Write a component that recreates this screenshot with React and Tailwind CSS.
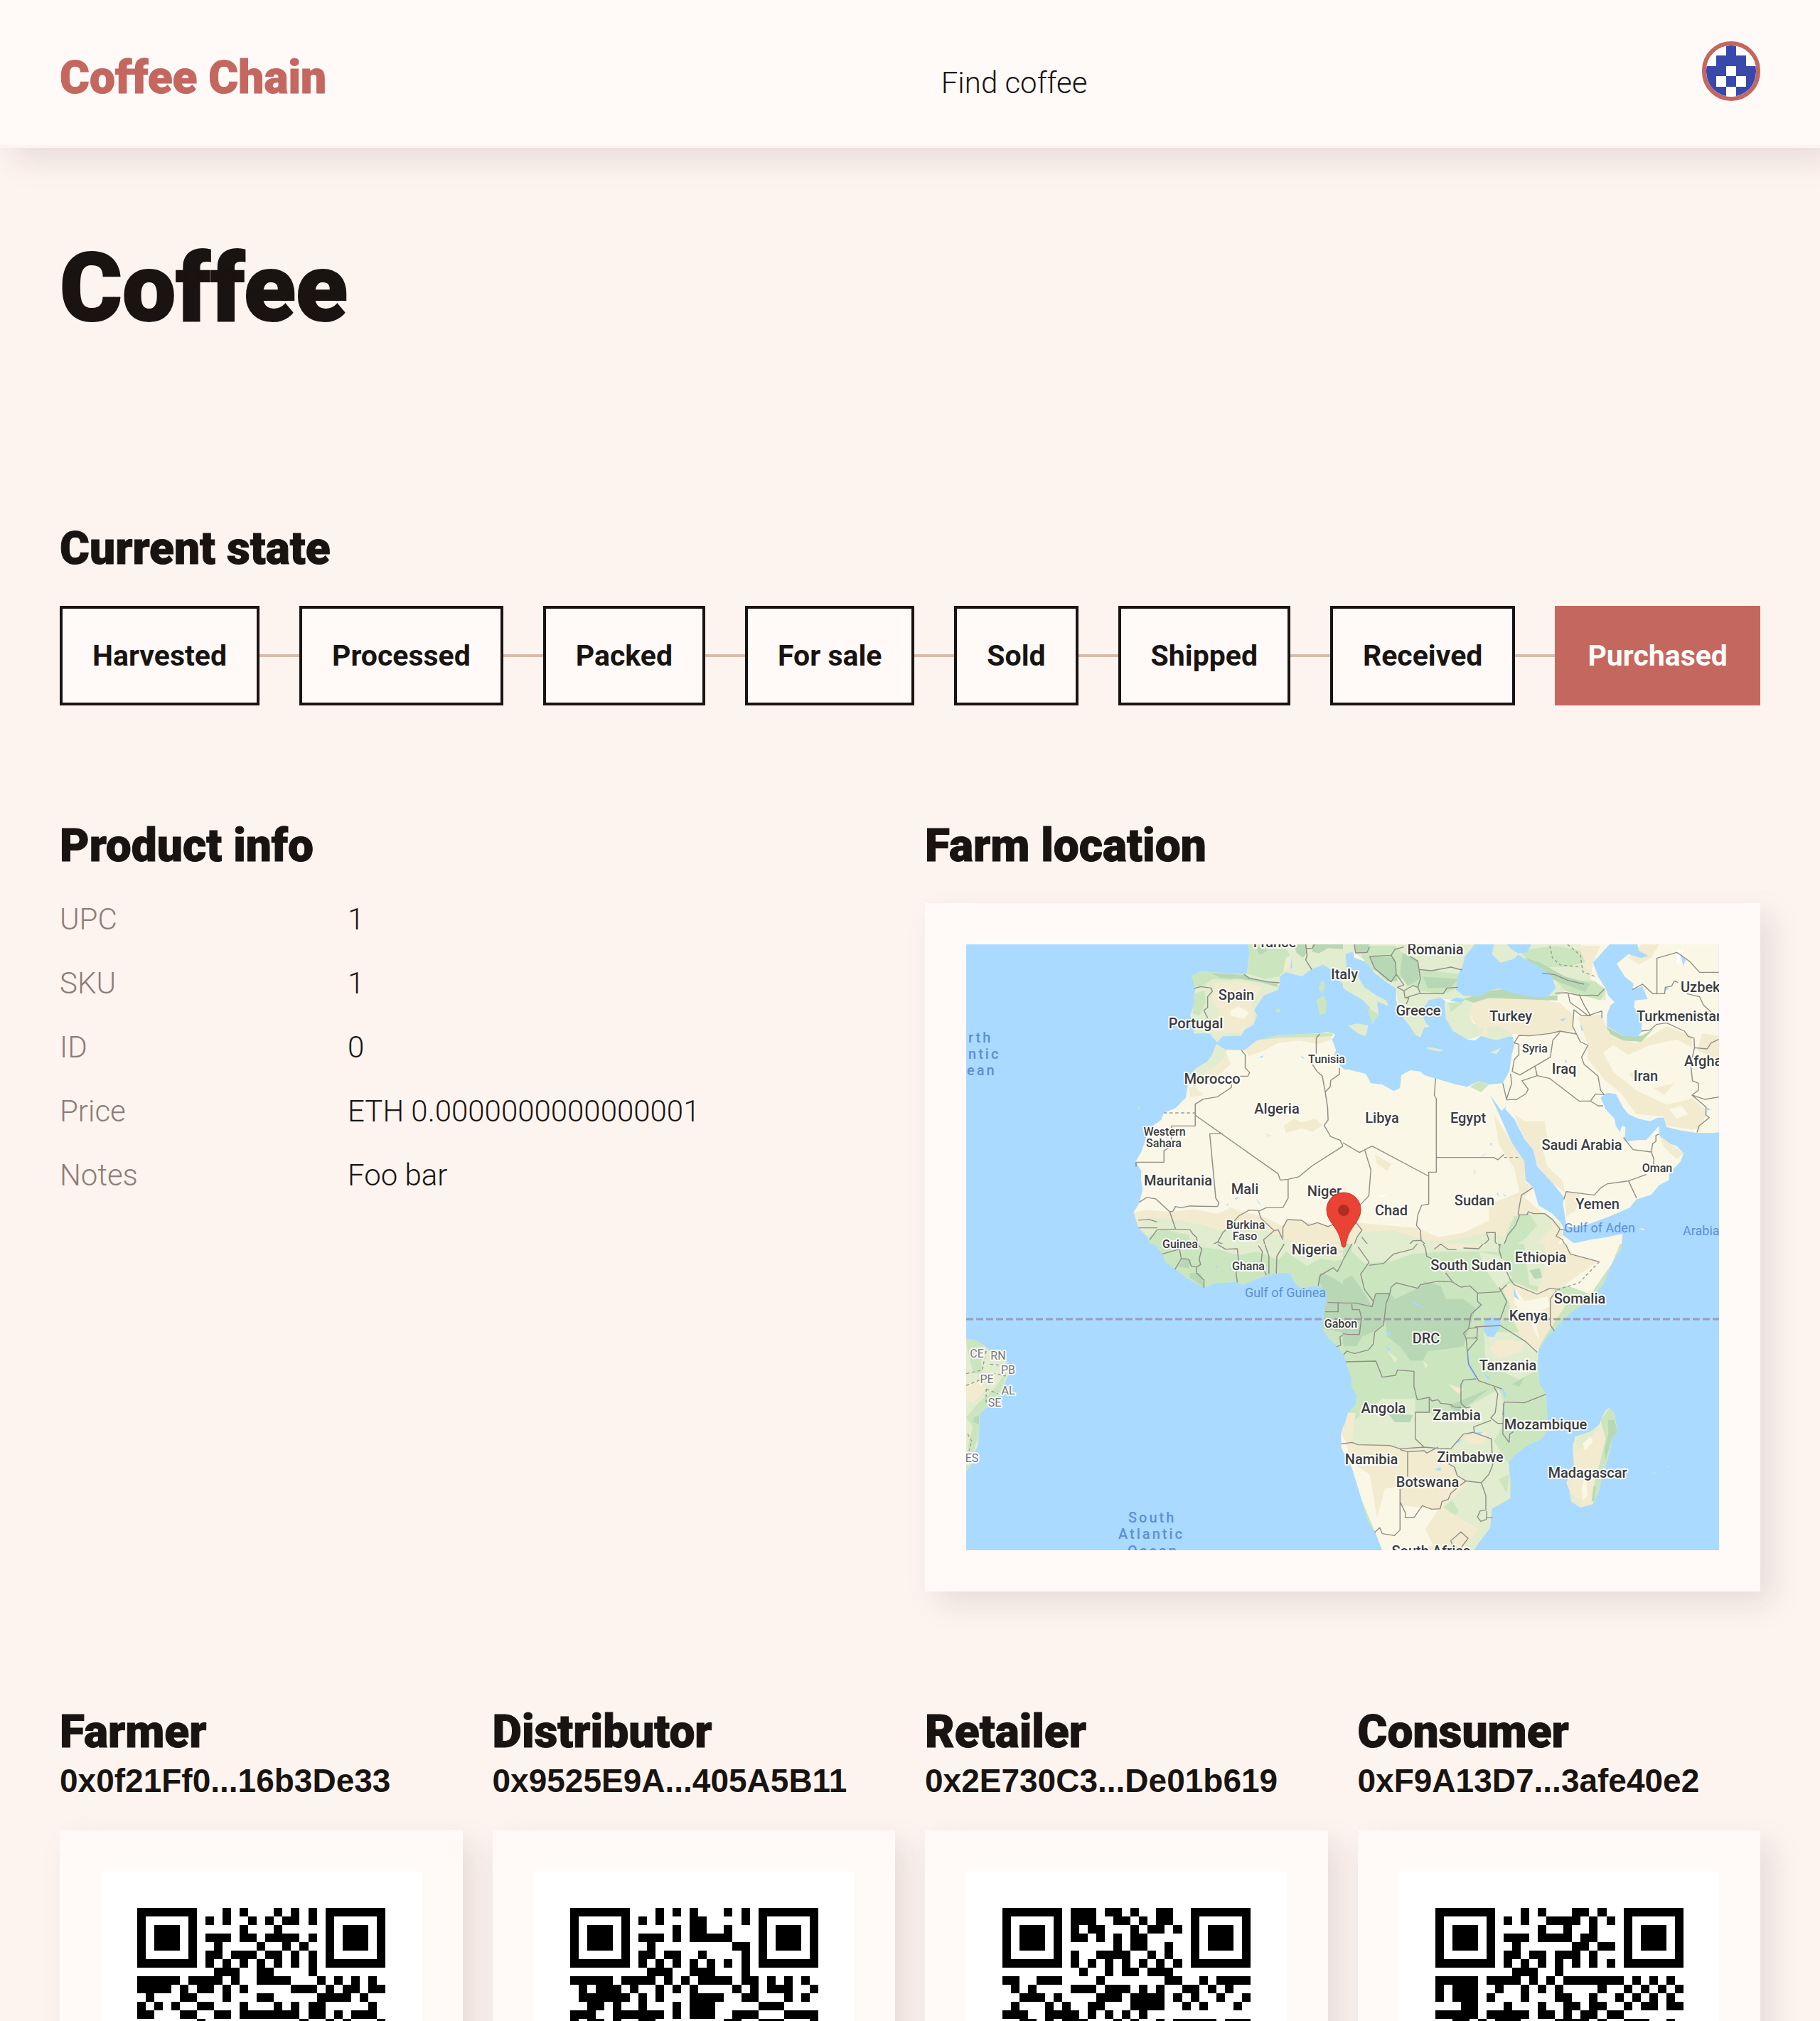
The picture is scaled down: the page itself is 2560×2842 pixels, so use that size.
import React from "react";

const STATES = ["Harvested", "Processed", "Packed", "For sale", "Sold", "Shipped", "Received", "Purchased"];
const CURRENT_STATE = "Purchased";

const INFO = [
  ["UPC", "1"],
  ["SKU", "1"],
  ["ID", "0"],
  ["Price", "ETH 0.0000000000000001"],
  ["Notes", "Foo bar"],
];

/* Each QR row lists its dark modules as column numbers or ranges; finder patterns are drawn apart. */
const PARTIES = [
  {
    role: "Farmer",
    address: "0x0f21Ff0...16b3De33",
    qr: [
      "10 12 16 18 20", "8 10 13 15 17-18 20", "12 16", "8-10 12-13 15-18 20", "9 14 17 19",
      "8-9 11-13 15-16 18 20", "8 10 12 14 16 18 20", "9-11 14-15 20",
      "0-4 6-9 11 14-17 21 23 25 27", "0-3 5 7-8 10 12 18-20 22 24-25 27-28", "1 5-6 10 14-15 21-24 26",
      "0 2 4 7-8 12 16 18 20-21 27", "0-1 5-6 9-10 12-18 20-21 23 25-27", "7 19 22 24 28",
    ],
  },
  {
    role: "Distributor",
    address: "0x9525E9A...405A5B11",
    qr: [
      "10 12 14 18 20", "8 10 14-15 20", "12 14-15 18", "8-10 12 14-18", "9 19-20",
      "8-9 11-12 15 20", "8 10 12 14 16 18 20", "9-11 14-16 20",
      "0-4 6-9 11 13 15-18 20-21 23 25 27", "1 3-5 7 10 12 14 19 21 23-25 28", "1-6 8 10 14-17 20-21 25 27",
      "2-3 5 8 12 14-16 22-24", "0-2 5-10 12 14-16 19-21 25-28", "0 2-3 5 8-9 18-19 22-24 28",
    ],
  },
  {
    role: "Retailer",
    address: "0x2E730C3...De01b619",
    qr: [
      "8-10 12-13 15 18-19", "8-10 13-14 16 18-19", "8 10-11 15 17-18 20", "8-9 11 13 15-16", "13 15-16 19",
      "8 11-14 17 19", "8 10 12 14 16 18 20", "9 12 14-15 17-19",
      "0-1 4-6 11 19-20 23 25-28", "1 3 8-10 12-14 16 18 21-22 24 26", "2-4 6 11-13 15-18 20 22 25 28",
      "1 5 7 10-11 15-18 21 23 27", "0-2 5-8 10 12 14 16", "2-3 5 7-9 13 15 18 20-24 26-28",
    ],
  },
  {
    role: "Consumer",
    address: "0xF9A13D7...3afe40e2",
    qr: [
      "10 12 16-17 19", "8 10 13-16 18 20", "12 15 18", "8-10 12-15 17-18", "9 16-17 19-20",
      "8-9 11-12 14-16 18", "8 10 12 14 16 18 20", "9-11 14",
      "0-4 6-9 11 13 15-21 23 25 27", "0 2-4 7 10 12 14 19 22 24 26 28", "0 2-4 6 10 14-15 18 21 23 25 27",
      "3-4 8 12 15-16 18-19 22 24-25 27-28", "0-4 6-10 12-13 15 17-18 20-21", "2-3 5 7-9 14-17 19 22-24 27",
    ],
  },
];

function QrCode({ rows, label }) {
  const d = rows
    .map((row, y) =>
      row
        .split(" ")
        .map((run) => {
          const [a, b = a] = run.split("-").map(Number);
          return `M${a} ${y}h${b - a + 1}v1h-${b - a + 1}z`;
        })
        .join("")
    )
    .join("");
  const finder = (x, y) =>
    `M${x} ${y}h7v7h-7zM${x + 1} ${y + 1}v5h5v-5zM${x + 2} ${y + 2}h3v3h-3z`;
  return (
    <svg viewBox="-4.2 -4.2 37.4 37.4" role="img" aria-label={label} className="block w-full bg-white" shapeRendering="crispEdges">
      <path d={d} />
      <path d={finder(0, 0) + finder(22, 0) + finder(0, 22)} />
    </svg>
  );
}

function Avatar() {
  return (
    <svg viewBox="0 0 5 5" preserveAspectRatio="none" className="h-full w-full" shapeRendering="crispEdges" aria-hidden="true">
      <rect width="5" height="5" fill="#fff" />
      <path fill="#3949ab" d="M2 0h1v1h1v1h1v3h-2v-1h-1v1h-2v-3h1v-1h1zM2 2v1h1v-1zM1 3v1h1v-1zM3 3v1h1v-1z" />
    </svg>
  );
}

const C = { land: "#faf7e6", tan: "#f2ebcf", pale: "#e2eccf", green: "#cbe6bf", deep: "#b8d8b5", sea: "#aadaff" };

const TL = [
  [C.pale, "M1126 54L1130 90 1122 178 1060 178 1000 172 945 168 912 190 925 240 920 310 905 355 922 400 918 430 980 430 1008 468 1030 442 1100 440 1112 415 1145 395 1160 355 1150 330 1185 270 1240 245 1248 215 1245 190 1270 172 1330 190 1365 160 1410 140 1450 165 1480 215 1520 260 1568 300 1568 250 1540 190 1500 140 1492 100 1525 90 1568 54Z"],
  [C.green, "M1126 54L1130 90 1124 178 1190 200 1240 190 1262 168 1290 110 1260 54ZM912 190L945 168 1060 178 1110 190 1060 205 990 200 960 225 925 235ZM925 260L960 250 965 300 940 355 915 345Z"],
  [C.deep, "M1300 54L1345 54 1350 90 1335 110 1310 90ZM1370 54L1530 54 1500 75 1430 70 1395 92 1370 85ZM985 175L1110 182 1160 205 1235 220 1240 235 1180 215 1100 200 1020 195ZM1150 54L1200 80 1170 100Z"],
  [C.tan, "M1000 215L1100 210 1180 235 1140 300 1150 370 1100 430 1000 425 975 400 1020 340 985 290ZM1270 110L1290 100 1285 150 1260 165Z"],
  [C.land, "M1060 330L1090 315 1130 340 1110 370 1060 355Z"],
  [C.green, "M1395 235L1405 208 1416 212 1418 240 1408 258 1396 245ZM1385 290L1415 268 1425 300 1420 345 1395 354 1392 320ZM1228 330L1243 324 1250 336 1238 342ZM1500 400L1530 388 1568 395 1568 432 1540 425ZM704 742L718 740 708 750Z"],
  [C.land, "M1005 475L1030 498 1112 500 1160 460 1240 438 1360 432 1395 430 1430 422 1458 435 1445 455 1460 500 1450 530 1475 565 1490 580 1530 582 1568 598 1568 1350 765 1350 745 1290 715 1255 705 1235 710 1210 690 1185 712 1145 725 1090 718 1040 720 1010 698 970 720 930 750 830 795 795 805 765 850 745 890 700 895 660 900 620 925 580 970 550 990 520Z"],
  [C.tan, "M1112 500L1160 460 1240 438 1395 430 1440 425 1445 455 1390 475 1320 460 1240 470 1190 500 1130 525ZM1040 500L1060 560 1000 620 900 660 905 700 960 690 890 625 925 580ZM690 1185L740 1175 830 1182 920 1172 1010 1190 1060 1165 1110 1185 1180 1200 1250 1240 1290 1215 1420 1240 1470 1232 1568 1240 1568 1350 765 1350 745 1290 705 1235ZM1260 820L1300 790 1330 805 1380 790 1410 815 1370 845 1330 830 1270 850ZM1190 850L1215 860 1200 868Z"],
  [C.pale, "M1005 475L1045 500 1030 540 960 600 915 612 925 580 970 550 990 520ZM740 1205L850 1215 940 1235 1020 1260 1080 1240 1180 1260 1240 1280 1300 1310 1400 1330 1520 1290 1568 1350 765 1350 745 1290 712 1250Z"],
  [C.green, "M1160 458L1240 436 1400 430 1440 424 1450 440 1380 445 1250 448ZM765 1350L745 1290 800 1255 900 1280 920 1350ZM940 1350L960 1325 1000 1330 1000 1350Z"],
  [C.sea, "M1165 532L1185 522 1180 532ZM1325 525L1338 530 1335 537ZM1075 1125L1095 1120 1080 1132ZM1155 1125L1178 1158 1165 1145ZM1045 1150L1052 1148 1046 1158ZM1290 110L1294 150 1287 158Z"],
];
const TL_LINES = "M1110 180L1130 197 1170 205 1200 212 1245 216M922 240L945 232 985 238 990 252 972 275 972 320 958 332 972 365M1345 54L1350 100 1345 120 1368 160M1345 72L1370 70 1378 54M1525 54L1532 88 1568 88M1100 500L1115 520 1115 575 1132 595 1125 610 1095 610M1062 645L1062 658 1010 697 955 707 925 728 925 820 835 820 835 905 806 925 806 973 700 973 700 992M925 775L1240 1022 1248 1048 1278 1045 1318 1035 1370 988 1487 905 1475 880 1440 865 1415 818 1430 795 1428 740 1418 670 1408 610 1388 590 1370 560M1398 432L1385 450 1385 515M1473 575L1473 602 1440 628 1438 655 1418 678M1487 905L1515 912 1545 930 1568 922M1030 853L980 853 1003 1125 1015 1145 1010 1160 905 1158 870 1165 850 1160 840 1180 828 1182 775 1128 740 1122 712 1142M828 1182L850 1255 905 1258 915 1275 930 1290 935 1330M1278 1048L1278 1125 1258 1165 1195 1165 1170 1178 1130 1175 1090 1200 1060 1240 1030 1270 1010 1310M1165 1178L1175 1210 1225 1262 1240 1258 1258 1300M1258 1290L1258 1250 1275 1215 1330 1218 1355 1240 1390 1228 1430 1245 1460 1230M1540 1160L1568 1130M1535 1225L1555 1250 1548 1290 1525 1350M850 1255L780 1258 752 1300M1225 1262L1185 1300 1195 1350M708 1218L750 1215 780 1225M710 1250L780 1250M1010 1310L980 1325 940 1320M1010 1310L1080 1340 1085 1350";

const TR = [
  [C.land, "M65 54L1506 54 1506 847 1480 850 1420 850 1360 840 1300 825 1290 785 1265 785 1235 800 1190 790 1150 770 1130 745 1100 685 1065 680 1040 700 1060 750 1095 790 1100 820 1140 885 1190 880 1220 880 1270 820 1272 860 1300 890 1340 905 1367 935 1355 970 1310 1020 1310 1048 1270 1070 1240 1110 1180 1130 1155 1165 1080 1200 990 1235 920 1250 905 1240 892 1150 895 1120 850 1060 790 990 775 920 740 875 700 790 665 750 670 710 665 740 650 757 605 690 640 770 690 890 730 960 745 1050 775 1080 795 1155 850 1190 880 1225 895 1250 890 1280 935 1315 1000 1300 1060 1290 1127 1275 1120 1350 0 1350 0 580 50 583 115 600 135 640 180 645 225 673 250 660 255 605 290 585 330 590 345 605 390 620 470 645 515 655 560 630 600 645 655 640 680 590 690 520 700 480 695 445 660 435 630 458 600 450 570 440 545 460 515 455 490 430 460 420 450 400 430 365 440 340 425 310 430 295 400 282 365 290 345 315 335 345 350 385 365 400 345 405 330 445 310 435 290 400 275 380 245 335 235 290 235 240 200 215 150 175 120 130 70 110 65 85Z"],
  [C.pale, "M0 54L65 54 65 85 35 95 40 150 85 190 110 235 150 265 195 290 205 315 160 295 165 350 140 390 145 360 130 320 105 290 40 250 0 215ZM45 397L80 388 125 395 115 442 85 430ZM355 488L380 490 422 500 405 506 360 496ZM603 510L648 490 630 517ZM65 54L780 54 960 54 1000 100 1000 200 1060 240 1060 290 980 270 900 250 830 300 560 300 500 290 400 282 365 290 345 315 335 345 350 385 365 400 345 405 330 445 310 435 290 400 245 335 235 240 150 175 120 130 65 85ZM425 300L560 290 520 350 540 390 640 400 700 415 690 440 630 458 570 440 515 455 460 420 430 365Z"],
  [C.tan, "M540 290L700 280 880 300 930 350 930 420 840 430 760 440 690 430 640 400 560 410 520 350ZM930 60L1040 60 1010 130 1000 200 960 120ZM1200 54L1270 54 1240 110 1190 140 1150 110ZM950 360L1040 350 1080 440 1180 470 1240 440 1300 400 1400 440 1400 490 1340 455 1230 480 1150 520 1090 480 1050 510 1090 590 1180 670 1300 730 1380 710 1400 700 1460 760 1430 840 1300 820 1290 780 1180 770 1120 680 1060 630 990 540 990 480ZM1150 600L1190 580 1170 625ZM1250 660L1330 640 1290 690ZM1440 430L1506 440 1506 540 1420 500ZM700 770L740 800 820 800 830 870 800 880 830 990 890 1050 900 1100 850 1060 790 990 775 920 740 875ZM620 770L690 890 740 970 745 1060 775 1080 740 1120 720 1100 700 1000 640 900ZM900 1095L960 1105 940 1180 905 1200ZM1270 860L1367 935 1340 960 1290 910ZM100 1230L200 1240 320 1250 400 1290 500 1270 600 1220 600 1150 720 1100 790 1170 880 1230 890 1280 860 1350 0 1350 60 1220ZM150 940L215 980 200 1010 160 980ZM560 440L590 400 600 440Z"],
  [C.land, "M1310 750L1360 735 1385 770 1340 790Z"],
  [C.pale, "M90 1270L220 1260 340 1300 420 1310 600 1270 660 1290 680 1230 720 1190 840 1200 850 1250 800 1300 780 1350 60 1350Z"],
  [C.green, "M100 60L230 60 330 160 490 180 470 240 420 265 330 250 260 200 140 160 100 110ZM720 80L860 60 960 80 980 130 900 150 830 150 760 130ZM860 200L1020 210 1060 250 1040 290 900 250ZM700 1200L760 1190 790 1240 740 1300 660 1350 670 1280ZM525 655L560 630 600 645 570 678ZM120 320L165 350 140 390ZM440 300L500 300 450 340Z"],
  [C.deep, "M70 54L130 54 125 90 75 90ZM130 105L230 110 240 210 200 210 150 160ZM260 90L320 120 325 200 280 230 250 180ZM340 190L480 200 450 235 360 240ZM740 110L800 130 900 190 1000 220 980 255 880 215 810 180ZM500 285L600 250 680 240 780 275 870 270 870 290 720 285 600 280 540 300ZM1060 400L1130 440 1200 440 1250 410 1200 465 1130 460 1080 435Z"],
  [C.sea, "M545 54L620 54 612 95 645 132 700 115 715 98 740 115 800 150 850 190 862 240 830 278 770 275 700 260 640 240 600 250 560 275 500 270 470 245 480 180 498 140 505 105ZM670 54L768 54 750 88 715 92 690 75ZM1045 90L1075 54 1185 54 1190 80 1228 102 1200 112 1150 95 1103 135 1135 190 1170 220 1165 245 1205 230 1225 285 1175 290 1172 320 1205 360 1200 425 1185 445 1130 440 1065 400 1065 350 1080 310 1095 298 1070 270 1060 240 1030 190 1010 130ZM445 292L470 278 512 286 490 300ZM360 290L410 280 425 290 420 312 370 310ZM880 370L905 365 890 380ZM960 390L972 415 965 420ZM900 535L908 550 903 555ZM1355 90L1375 120 1365 145ZM1295 232L1310 240 1298 248ZM565 952L595 932 580 945ZM540 1000L548 1020 543 1018ZM605 895L614 892 608 905ZM655 1105L670 1118 660 1115ZM630 1105L635 1102 640 1122ZM732 1268L742 1265 738 1278ZM1455 740L1475 750 1460 755Z"],
  [C.land, "M1115 850L1125 818 1138 825 1136 865 1125 872ZM1192 1252L1215 1254 1205 1260Z"],
  ["#ffffff", "M1340 80L1358 75 1350 135 1340 135ZM165 1115L205 1108 180 1120ZM1405 835L1418 835 1412 850ZM1360 70L1370 85 1362 90Z"],
];
const TR_LINES = "M130 105L215 100 232 130 235 180 215 212 150 155 130 105M70 54L75 90 120 88 130 65M215 100L230 75 265 65M290 105L320 125 325 160 375 165 450 150 495 162M325 160L330 200 320 235 330 260 270 280 265 250 300 228 320 235M235 180L265 225 240 235 265 250M330 262L420 262 435 238 478 235M270 280L285 280 275 305M810 175L860 182 910 205 975 222M860 260L905 258 960 270 1005 268 1030 270 1055 242M912 260L920 300 955 325 990 355M955 265L975 310 1000 355 965 355 935 330 930 400 945 432 880 420 840 430 760 440 718 438 700 470 718 475 718 520 700 540 692 590 722 605 842 530 852 458 880 425M990 355L1045 335 1045 365M945 432L960 465 990 480 965 530 975 560 1030 610 1040 670 1055 688M1055 688L1020 685 1000 715 955 715 840 620 790 608 782 568M1000 715L1030 735 1050 735M790 608L730 630 755 665 745 685 710 708 670 710 655 640M685 600L690 640 670 705M1200 420L1235 415 1260 392 1300 385 1370 420 1385 442 1408 450 1410 490 1460 495 1475 470 1506 455M1410 490L1395 560 1402 630 1425 640 1425 670 1400 690 1455 740 1455 775 1468 785 1428 820 1420 848M1400 690L1450 708 1506 698M1165 245L1205 222 1245 262 1292 262 1295 235 1320 230 1330 208 1345 215M1262 265L1262 112 1340 88 1390 125 1430 172 1506 172M1380 262L1430 275 1445 310 1475 340M1130 870L1168 920 1240 930 1245 895 1258 885 1258 860 1270 855M1240 930L1250 960 1248 985M1220 1025L1150 1052 1065 1065 1040 1082 1015 1112 905 1097 895 1130M1150 1052L1182 1125M390 620L385 690 393 705 393 1015 363 1015 363 1150 335 1155 320 1195 315 1240 330 1260 333 1303 350 1320 355 1350M393 953L620 953 635 963 660 940M363 1032L140 905 90 932 0 875M110 918L135 1005 127 1115 60 1190M12 575L12 602 0 605M333 1303L300 1305 260 1350M774 1080L728 1112 715 1190 720 1200 705 1240 675 1280 650 1345M715 1195L750 1195 755 1182 775 1190 820 1190 850 1215 880 1255 900 1260M880 1255L865 1285 890 1300 910 1350M75 1225L100 1260 80 1290 60 1350M100 1290L130 1330 80 1330M385 1335L420 1320 440 1340 475 1340M500 1330L560 1340 600 1300 590 1270 625 1270 625 1310 650 1345";

const BL = [
  [C.green, "M750 0L770 30 800 70 810 105 850 135 890 170 930 195 958 212 1000 195 1080 188 1105 200 1150 180 1200 160 1250 150 1285 152 1305 195 1330 215 1380 205 1405 210 1428 235 1425 280 1415 310 1420 340 1408 385 1430 425 1465 460 1490 500 1500 540 1520 590 1515 625 1535 660 1535 700 1505 735 1495 780 1480 825 1480 885 1495 930 1520 980 1550 1040 1555 1100 1568 1160 1568 0Z"],
  [C.pale, "M930 0L1568 0 1568 20 1510 80 1460 100 1400 90 1350 120 1270 60 1240 95 1160 60 1090 75 1010 50 940 40ZM1525 760L1568 720 1568 870 1500 870Z"],
  [C.tan, "M1280 0L1568 0 1530 40 1470 80 1300 40ZM1505 735L1525 760 1505 860 1568 875 1568 1160 1550 1040 1480 885 1480 825Z"],
  [C.deep, "M880 90L910 95 900 130 860 125ZM905 150L945 150 958 210 905 170ZM1400 150L1430 160 1520 220 1568 200 1568 290 1560 400 1568 450 1510 460 1480 400 1408 385 1425 240 1390 180Z"],
  [C.land, "M1480 830L1492 840 1485 890 1520 960 1555 1040 1568 1160 1550 1040 1520 980 1480 885Z"],
  [C.sea, "M1135 85L1160 110 1185 125 1160 120ZM1005 115L1012 125 1005 132ZM1480 55L1485 60 1470 65Z"],
  [C.pale, "M54 430L85 432 115 450 145 480 200 490 210 530 215 580 190 640 180 670 130 720 105 745 103 830 98 880 75 930 70 965 54 990Z"],
  [C.green, "M54 430L85 432 115 450 130 480 110 520 115 580 80 570 60 480ZM212 560L190 640 130 720 105 745 103 830 75 930 60 880 80 800 54 760 100 700 160 640ZM54 960L70 960 54 990Z"],
  [C.tan, "M54 620L100 600 130 640 80 700 54 690Z"],
  [C.deep, "M85 760L103 750 103 790 80 780Z"],
];
const BL_LINES = "M865 50L872 90 848 135M872 90L900 92 910 122 930 125 930 150 958 180 958 212M800 70L865 50M935 30L950 50 940 90 945 115 930 125M1010 30L1040 50 1085 48 1090 110 1080 150 1085 190M1165 35L1180 60 1175 110 1195 160M1190 30L1205 80 1205 155M1258 0L1262 30 1235 80 1233 152M1538 0L1500 70 1465 145 1450 128 1400 160 1392 205M1545 40L1568 60 1552 160 1568 200M1428 275L1568 278M1468 278L1468 314 1418 314M1520 282L1522 305 1545 305 1550 360 1552 410 1510 415 1500 402 1475 420 1478 455 1462 462M1568 478L1520 490 1505 480 1490 510M1495 525L1568 522M1478 872L1520 865 1545 875 1568 875";
const BL_DOTS = "M130 480L115 560 54 575M145 535L190 540M54 625L110 600 160 575 205 585M130 640L175 660M130 640L130 700M60 830L75 860 65 900";

const BR = [
  [C.green, "M0 460L30 500 50 570 60 600 58 630 78 665 75 705 45 740 35 790 20 830 20 890 60 970 95 1040 100 1110 120 1190 155 1250 180 1320 540 1320 570 1270 605 1225 612 1145 680 1105 688 1050 685 1010 670 960 700 920 750 880 810 850 830 815 830 740 825 660 800 620 795 540 790 490 825 425 870 375 920 320 1000 260 1050 200 1085 110 1120 50 1127 0 905 0 0 0Z"],
  [C.pale, "M60 0L650 0 640 60 560 60 420 60 300 70 220 100 110 110 60 60ZM560 60L650 80 690 170 640 220 590 140ZM580 400L800 400 790 560 720 600 640 560 590 560ZM180 680L310 680 310 740 370 740 400 780 540 700 640 640 660 700 660 780 620 860 680 960 685 1100 612 1145 605 1225 540 1320 400 1320 480 1150 400 1020 300 900 45 880 60 780ZM735 0L900 0 1040 100 860 220 760 200ZM200 480L240 510 230 530ZM340 520L360 540 350 555Z"],
  [C.tan, "M340 0L600 0 590 30 470 50 390 40ZM820 0L1040 100 960 190 860 220 900 290 820 420 790 480 740 440 700 360 680 280 650 210 700 190 790 230 820 130ZM640 430L740 440 730 480 640 510 600 470ZM45 740L75 740 60 870 280 890 460 900 440 960 520 1040 420 1140 480 1180 560 1230 500 1320 180 1320 155 1250 100 1110 60 970 20 890 20 830ZM440 620L500 640 480 660ZM500 840L590 820 580 870 520 870Z"],
  [C.land, "M900 20L930 25 1060 8 1127 0 1085 110 1000 240 900 200 1030 100 920 70ZM700 210L740 270 830 250 840 290 780 330 800 440 760 350 700 280ZM20 830L35 860 60 950 130 1000 160 1180 190 1060 250 1050 250 1130 330 1140 400 1150 350 1230 380 1300 300 1320 180 1320 155 1250 100 1110 60 970 20 890Z"],
  [C.deep, "M0 200L60 160 100 220 140 290 150 240 210 235 230 260 210 330 160 390 100 420 80 460 30 460 0 400ZM230 260L320 215 350 185 410 205 430 260 500 260 550 300 510 420 500 460 440 470 360 480 340 520 290 520 250 460 200 420 190 350ZM760 140L800 130 810 170 780 175ZM690 620L740 590 720 630ZM200 740L300 750 290 780 230 780ZM440 710L600 640 540 690 480 740Z"],
  [C.green, "M640 1020L680 1000 670 1080ZM660 700L825 665 830 815 700 900 660 940 640 860Z"],
  [C.sea, "M585 345L610 335 645 345 645 375 620 420 590 418 580 390ZM512 470L520 480 525 530 560 600 545 595 515 540ZM550 290L570 280 555 300ZM652 635L668 660 665 680 655 660ZM655 700L665 750 655 740ZM698 205L708 240 720 265 700 250ZM580 570L608 598 590 595ZM195 395L212 402 205 420ZM490 605L500 620 490 630ZM385 980L410 970 410 985ZM190 455L215 475 205 478ZM290 265L350 300 310 285ZM545 822L580 822 555 830ZM470 860L495 852 480 868Z"],
  [C.tan, "M1075 718L1095 745 1105 820 1085 850 1075 910 1050 1000 1030 1080 1010 1125 960 1140 925 1115 918 1070 905 1035 935 970 930 880 940 840 1000 820 1035 790 1045 760 1060 730Z"],
  [C.green, "M1075 718L1095 745 1105 820 1085 850 1075 910 1050 1000 1030 1080 1010 1125 1010 1060 1040 940 1060 850 1040 770Z"],
  [C.deep, "M1070 770L1095 770 1105 820 1085 850 1060 940 1055 900 1070 830ZM1012 1050L1022 1050 1015 1110 1005 1115Z"],
  [C.pale, "M940 840L1000 820 1030 800 990 870 950 900ZM920 1080L960 1110 960 1138 925 1115ZM1248 990L1254 992 1250 1000ZM1303 965L1310 968 1305 972Z"],
  [C.land, "M965 1060L980 1000 990 1090 970 1110ZM970 870L1000 840 1010 860 980 900Z"],
];
const BR_LINES = "M75 0L0 145M85 40L128 105 95 155 110 220 145 270 140 293 75 277 0 277M8 280L8 314 0 314M60 282L62 305 90 305 98 340 90 410 45 410 20 405 15 455 0 462M128 118L185 110 225 70 300 50 330 12 335 0M335 15L350 45 355 80 375 90M210 237L155 237 143 275M210 237L215 210 235 192 320 215 330 200 400 185 455 188 490 210 525 205 555 235 555 270 570 285 530 325 520 385M210 237L195 280 185 370 150 400 145 450 125 475 70 490 40 480 28 495M455 185L430 150M555 235L640 230 670 200M640 210L670 270 645 345M670 145L685 180 700 200 790 240 840 215 880 220M865 225L842 260 842 370 858 395M545 378L645 372 745 440 790 485M520 385L555 380 553 425 510 425 500 405 520 385M510 425L515 480 555 430 545 420M515 480L520 535 560 605 640 635 652 640M36 525L155 522 180 590 232 582 240 560 305 565 305 630 318 685 365 675 365 738 310 738 310 850 345 885M365 675L375 690 400 685 410 700 450 705 460 715 490 718M550 597L500 602 490 620 490 700 510 720 528 715M620 632L635 660 625 740 608 762 635 785 655 785M660 695L740 698 825 662M660 695L655 750M608 772L540 800 543 825 610 850 615 960 600 1000 570 1035 510 1028 475 1005 465 970 440 955M543 822L500 830 450 892 400 890 345 885 250 892 210 878 85 875 60 865 18 872M250 895L280 905 345 900 355 910 400 885M280 905L280 1010M250 1062L250 1235 228 1258 180 1250 170 1225 150 1245M250 1115L272 1165 270 1182 305 1182 338 1132 375 1147 408 1145 415 1115 440 1105 450 1080 485 1048 510 1028M570 1035L588 1090 588 1150 565 1155 555 1180 568 1198 590 1190 592 1155M590 1183L615 1183M450 1280L490 1243 518 1270 490 1310 460 1310ZM658 700L655 830 680 865 682 830 697 820M650 0L640 50 650 90M890 0L920 70 1035 103M385 50L410 28 440 52 472 52M500 45L560 48 600 0M620 0L645 40";
const BR_DASH = "M1035 103L955 192 870 220";

function Quadrant({ clip, transform, shapes, lines, dashes }) {
  return (
    <g clipPath={`url(#${clip})`}>
      <g transform={transform}>
        {shapes.map(([fill, d], i) => (
          <path key={i} d={d} fill={fill} />
        ))}
        <path d={lines} fill="none" stroke="#8f8e88" strokeWidth="4" strokeLinejoin="round" />
        {dashes && <path d={dashes} fill="none" stroke="#9a9a94" strokeWidth="4" strokeDasharray="12 10" />}
      </g>
    </g>
  );
}

const COUNTRIES = [
  ["France", 434, 4], ["Spain", 380, 78], ["Portugal", 323, 118], ["Italy", 532, 49], ["Morocco", 346, 196],
  ["Algeria", 437, 238], ["Mauritania", 298, 339], ["Mali", 392, 351], ["Niger", 504, 354], ["Romania", 660, 14],
  ["Greece", 636, 100], ["Turkey", 766, 108], ["Iraq", 841, 182], ["Iran", 956, 192], ["Libya", 585, 251],
  ["Egypt", 706, 251], ["Saudi Arabia", 866, 289], ["Sudan", 715, 367], ["Yemen", 888, 372], ["Chad", 598, 381],
  ["Nigeria", 490, 436], ["Ethiopia", 808, 447], ["South Sudan", 710, 458], ["Somalia", 863, 505], ["Kenya", 791, 529],
  ["DRC", 647, 561], ["Tanzania", 762, 599], ["Angola", 587, 659], ["Zambia", 690, 669], ["Mozambique", 815, 682],
  ["Namibia", 570, 731], ["Zimbabwe", 709, 728], ["Botswana", 649, 763], ["Madagascar", 874, 750], ["South Africa", 654, 860],
];
const SMALL = [
  ["Tunisia", 507, 167], ["Western", 279, 269], ["Sahara", 278, 285], ["Burkina", 393, 400], ["Faso", 392, 416],
  ["Guinea", 301, 427], ["Syria", 800, 152], ["Oman", 972, 320], ["Ghana", 397, 458], ["Gabon", 527, 539],
];
const REGIONS = [["CE", 15, 581], ["RN", 45, 584], ["PB", 59, 604], ["PE", 29, 617], ["AL", 59, 633], ["SE", 40, 650], ["ES", 8, 728]];
const EDGE = [["Uzbek", 1005, 67], ["Turkmenistan", 943, 108], ["Afgha", 1010, 171]];
const OCEAN = [["rth", 3, 138], ["ntic", 3, 161], ["ean", 1, 184], ["South", 228, 813], ["Atlantic", 214, 836], ["Ocean", 227, 860]];

const labels = (list) => list.map(([t, x, y]) => <text key={t} x={x} y={y}>{t}</text>);

function FarmMap() {
  return (
    <svg viewBox="0 0 1059 852" role="img" aria-label="Map of the farm location" className="block w-full font-['Roboto',sans-serif]">
      <defs>
        <clipPath id="nw"><rect x="0" y="0" width="531" height="422" /></clipPath>
        <clipPath id="ne"><rect x="530" y="0" width="529" height="422" /></clipPath>
        <clipPath id="sw"><rect x="0" y="421" width="531" height="431" /></clipPath>
        <clipPath id="se"><rect x="530" y="421" width="529" height="431" /></clipPath>
      </defs>
      <rect width="1059" height="852" fill={C.sea} />
      <Quadrant clip="nw" transform="translate(-20 -18) scale(.37 .3333)" shapes={TL} lines={TL_LINES} dashes="M805 765L925 765" />
      <Quadrant clip="ne" transform="translate(521 -18) scale(.3571 .3333)" shapes={TR} lines={TR_LINES} dashes="M840 60L850 110 880 140 960 150M910 54L960 100 970 170 1020 190M660 953L725 953" />
      <Quadrant clip="sw" transform="translate(-20 412) scale(.37 .3333)" shapes={BL} lines={BL_LINES} dashes={BL_DOTS} />
      <Quadrant clip="se" transform="translate(521 412) scale(.3571 .3333)" shapes={BR} lines={BR_LINES} dashes={BR_DASH} />
      <path d="M0 527H1059" stroke="#9c86a0" strokeOpacity=".75" strokeWidth="3" strokeDasharray="10 4" />
      <g fill="#3c3c3c" stroke="#fff" strokeOpacity=".9" strokeWidth="4" strokeLinejoin="round" paintOrder="stroke" fontWeight="500">
        <g textAnchor="middle" fontSize="20">{labels(COUNTRIES)}</g>
        <g textAnchor="middle" fontSize="16">{labels(SMALL)}</g>
        <g fontSize="20">{labels(EDGE)}</g>
        <g textAnchor="middle" fontSize="16" fill="#777" fontWeight="400">{labels(REGIONS)}</g>
      </g>
      <g fill="#5b8fd6" fontSize="18" fontWeight="400">
        <text x="891" y="405" textAnchor="middle">Gulf of Aden</text>
        <text x="449" y="496" textAnchor="middle">Gulf of Guinea</text>
        <text x="1008" y="409">Arabia</text>
      </g>
      <g fill="#5b8fd6" fontSize="20" fontWeight="500" className="tracking-[3px]">{labels(OCEAN)}</g>
      <path d="M531 426c-3 0-3-4-4-9-4-20-20-27-20-44a24 24 0 0 1 48 0c0 17-16 24-20 44-1 5-1 9-4 9z" fill="#ea4335" stroke="#c5372b" strokeWidth="1" />
      <circle cx="531" cy="374" r="8" fill="#b02d22" />
    </svg>
  );
}

function Heading({ children }) {
  return <h2 className="text-[64px] leading-[84px] font-black [-webkit-text-stroke:1px_currentColor]">{children}</h2>;
}

const CARD = "bg-[#fffaf8] p-[58px] shadow-[17px_17px_42px_rgba(26,21,19,0.1)]";

export default function App() {
  return (
    <div className="h-screen overflow-hidden bg-[#fef4ef] font-['Roboto',sans-serif] text-[42px] font-light text-[#191412]">
      <header className="flex items-start justify-between border-b-4 border-[#fef4ef] bg-[#fffaf8] px-[84px] pt-[58px] pb-[28px] shadow-[17px_17px_42px_rgba(26,21,19,0.1)]">
        <a href="#home" className="text-[64px] leading-[104px] font-black text-[#c4675f] [-webkit-text-stroke:1px_currentColor]">Coffee Chain</a>
        <nav>
          <a href="#find" className="block leading-[118px]">Find coffee</a>
        </nav>
        <button type="button" aria-label="Account" className="h-[84px] w-[82px] overflow-hidden rounded-full border-6 border-[#c4675f]">
          <Avatar />
        </button>
      </header>

      <main className="px-[84px] pt-[114px]">
        <h1 className="text-[134px] leading-[168px] font-black [-webkit-text-stroke:2px_currentColor]">Coffee</h1>

        <section className="mt-[240px]">
          <Heading>Current state</Heading>
          <ol className="mt-[38px] flex items-center text-[41px]">
            {STATES.map((state, i) => (
              <React.Fragment key={state}>
                {i > 0 && <li aria-hidden="true" className="h-1 flex-1 bg-[#d8bbab]" />}
                <li
                  className={
                    state === CURRENT_STATE
                      ? "border-4 border-[#c4675f] bg-[#c4675f] px-[42px] py-[34px] leading-[64px] font-bold text-[#fffaf8]"
                      : "border-4 border-[#191412] bg-[#fffaf8] px-[42px] py-[34px] leading-[64px] font-bold"
                  }
                >
                  {state}
                </li>
              </React.Fragment>
            ))}
          </ol>
        </section>

        <div className="mt-[156px] grid grid-cols-2 items-start gap-[42px]">
          <section>
            <Heading>Product info</Heading>
            <dl className="mt-[31px] grid grid-cols-[405px_1fr] gap-y-[30px] leading-[60px]">
              {INFO.map(([term, value]) => (
                <React.Fragment key={term}>
                  <dt className="text-[#8d7c77]">{term}</dt>
                  <dd>{value}</dd>
                </React.Fragment>
              ))}
            </dl>
          </section>
          <section>
            <Heading>Farm location</Heading>
            <div className={`mt-[38px] ${CARD}`}>
              <FarmMap />
            </div>
          </section>
        </div>

        <div className="mt-[156px] grid grid-cols-4 gap-[42px]">
          {PARTIES.map(({ role, address, qr }) => (
            <section key={role}>
              <Heading>{role}</Heading>
              <p className="font-['Liberation_Sans',sans-serif] text-[46px] leading-[52px] font-bold">{address}</p>
              <div className={`mt-[44px] ${CARD}`}>
                <QrCode rows={qr} label={`QR code of the ${role.toLowerCase()} address`} />
              </div>
            </section>
          ))}
        </div>
      </main>
    </div>
  );
}
